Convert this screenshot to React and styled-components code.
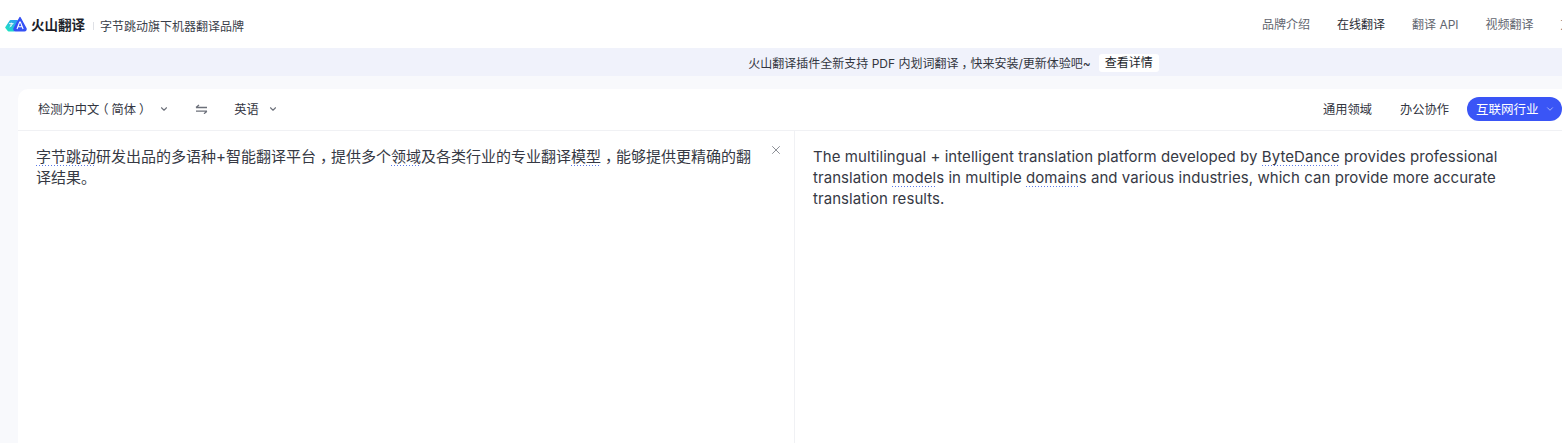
import styled, { createGlobalStyle } from "styled-components";
import { ChevronDown, X } from "lucide-react";

const GlobalStyle = createGlobalStyle`
  html, body {
    margin: 0;
    padding: 0;
    background: #f8f9fc;
    overflow: hidden;
    font-family: Inter, "Noto Sans CJK SC", sans-serif;
  }
`;

const Page = styled.div`
  width: 1562px;
  height: 443px;
  overflow: hidden;
  display: flex;
  flex-direction: column;
`;

const Header = styled.header`
  height: 48px;
  flex: none;
  background: #fff;
  display: flex;
  align-items: center;
  padding-left: 5px;
`;

const Logo = styled.div`
  display: flex;
  align-items: center;
  gap: 4px;
  font-size: 13.5px;
  font-weight: 700;
  color: #1c1f2b;
`;

const Slogan = styled.div`
  margin-left: 8px;
  padding-left: 7px;
  font-size: 12px;
  color: #3a3e4a;
  position: relative;
  top: 1px;
  &::before {
    content: "";
    position: absolute;
    left: 0;
    top: 5px;
    height: 8px;
    width: 1px;
    background: #dfe1e6;
  }
`;

const Nav = styled.nav`
  margin-left: auto;
  display: flex;
  gap: 27px;
  flex: none;
  width: 300px;
  overflow: hidden;
  font-size: 12px;
  white-space: nowrap;
  margin-bottom: 2px;
`;

const NavItem = styled.span`
  color: ${(p) => (p.$active ? "#2a2d36" : "#62666f")};
`;

const Notice = styled.div`
  height: 28px;
  flex: none;
  background: #f0f2fb;
  display: flex;
  align-items: center;
  justify-content: center;
  gap: 8px;
  font-size: 12px;
  color: #33363f;
  padding-left: 345px;
  box-sizing: border-box;
`;

const NoticeButton = styled.span`
  background: #fff;
  border-radius: 3px;
  padding: 1px 6px;
  margin-top: 2px;
  line-height: 16px;
  color: #1c1f2b;
`;

const Card = styled.main`
  margin: 13px 0 0 18px;
  flex: 1;
  background: #fff;
  border-radius: 10px 0 0 0;
  display: flex;
  flex-direction: column;
  min-height: 0;
`;

const Toolbar = styled.div`
  height: 39px;
  flex: none;
  border-bottom: 1px solid #f0f1f4;
  display: flex;
  align-items: center;
  padding: 0 0 2px 20px;
  font-size: 12.25px;
  color: #33363f;
`;

const LangButton = styled.span`
  display: flex;
  flex: none;
  align-items: center;
  white-space: nowrap;
  gap: ${(p) => p.$gap}px;
  svg {
    color: #6c707a;
  }
`;

const Swap = styled.svg`
  margin: 0 26px 0 26px;
  flex: none;
`;

const Domains = styled.div`
  margin-left: auto;
  display: flex;
  align-items: center;
  gap: 28px;
`;

const Pill = styled.span`
  background: #3a55f6;
  color: #fff;
  border-radius: 12px;
  height: 24px;
  width: 95px;
  margin-left: -10px;
  box-sizing: border-box;
  padding-left: 9px;
  display: flex;
  align-items: center;
  gap: 6px;
  font-size: 12.5px;
  svg {
    color: #b9c4fb;
  }
`;

const Panes = styled.div`
  flex: 1;
  display: flex;
  min-height: 0;
`;

const SourcePane = styled.div`
  width: 777px;
  flex: none;
  box-sizing: border-box;
  border-right: 1px solid #f0f1f4;
  padding: 15px 40px 0 18px;
  position: relative;
  font-size: 15px;
  line-height: 21px;
  color: #363944;
`;

const ClearButton = styled(X)`
  position: absolute;
  top: 12px;
  right: 11px;
  color: #5c606a;
`;

const TargetPane = styled.div`
  flex: 1;
  padding: 15px 60px 0 18px;
  font-size: 15px;
  letter-spacing: 0.06px;
  line-height: 21px;
  color: #363944;
`;

const Term = styled.span`
  background-image: linear-gradient(to right, #5a78e8 50%, transparent 50%);
  background-size: 3px 1px;
  background-repeat: repeat-x;
  background-position: 0 100%;
`;

// punctuation sits centered in its box in the reference, so nudge it by margins
const Punct = styled.span`
  margin-left: ${(p) => p.$shift}px;
  margin-right: ${(p) => -p.$shift}px;
`;

const LogoMark = () => (
  <svg width="22" height="16" viewBox="0 0 22 16">
    <defs>
      <linearGradient id="lg" x1="0" y1="1" x2="1" y2="0">
        <stop offset="0" stopColor="#1de6c0" />
        <stop offset="1" stopColor="#2f9bf5" />
      </linearGradient>
    </defs>
    <path
      d="M5.5 5 H12 L9 14.5 H3.5 L1.2 11.5 Z"
      fill="url(#lg)"
      stroke="url(#lg)"
      strokeWidth="2"
      strokeLinejoin="round"
    />
    <path
      d="M15 1.5 L21 12.5 Q21.3 14.8 19.5 14.8 H10.5 Q8.7 14.8 9 12.5 Z"
      fill="#3450f5"
      stroke="#3450f5"
      strokeWidth="1.4"
      strokeLinejoin="round"
    />
    <path d="M12 13 L14.7 6 H15.4 L18.1 13 M13 10.8 H17.1" stroke="#fff" strokeWidth="1.1" fill="none" />
    <path d="M4 7.6 H8.6 M6.3 6.6 L5.8 10.8 M7.8 8 L4.6 11" stroke="#fff" strokeWidth="0.8" fill="none" />
  </svg>
);

export default function App() {
  return (
    <Page>
      <GlobalStyle />
      <Header>
        <Logo>
          <LogoMark />
          火山翻译
        </Logo>
        <Slogan>字节跳动旗下机器翻译品牌</Slogan>
        <Nav>
          <NavItem>品牌介绍</NavItem>
          <NavItem $active>在线翻译</NavItem>
          <NavItem>翻译 API</NavItem>
          <NavItem>视频翻译</NavItem>
          <NavItem>文档翻译</NavItem>
        </Nav>
      </Header>
      <Notice>
        <span>
          火山翻译插件全新支持 PDF 内划词翻译<Punct $shift={3}>，</Punct>快来安装/更新体验吧~
        </span>
        <NoticeButton>查看详情</NoticeButton>
      </Notice>
      <Card>
        <Toolbar>
          <LangButton $gap={11}>
            <span>
              检测为中文<Punct $shift={-3}>（</Punct>简体<Punct $shift={3}>）</Punct>
            </span>
            <ChevronDown size={10} strokeWidth={2.6} />
          </LangButton>
          <Swap width="13" height="10" viewBox="0 0 13 10" fill="none" stroke="#6c707a" strokeWidth="1.3">
            <path d="M1 3.5 H12 M1 3.5 L4 1" />
            <path d="M1 7.2 H12 M12 7.2 L9 9.7" />
          </Swap>
          <LangButton $gap={9}>
            英语
            <ChevronDown size={10} strokeWidth={2.6} />
          </LangButton>
          <Domains>
            <span>通用领域</span>
            <span>办公协作</span>
            <Pill>
              互联网行业
              <ChevronDown size={10} />
            </Pill>
          </Domains>
        </Toolbar>
        <Panes>
          <SourcePane>
            <Term>字节跳动</Term>研发出品的多语种+智能翻译平台<Punct $shift={4}>，</Punct>提供多个<Term>领域</Term>及各类行业的专业翻译<Term>模型</Term><Punct $shift={4}>，</Punct>能够提供更精确的翻译结果。
            <ClearButton size={14} strokeWidth={1.2} />
          </SourcePane>
          <TargetPane>
            The multilingual + intelligent translation platform developed by <Term>ByteDance</Term> provides professional translation <Term>model</Term>s in multiple <Term>domain</Term>s and various industries, which can provide more accurate translation results.
          </TargetPane>
        </Panes>
      </Card>
    </Page>
  );
}
